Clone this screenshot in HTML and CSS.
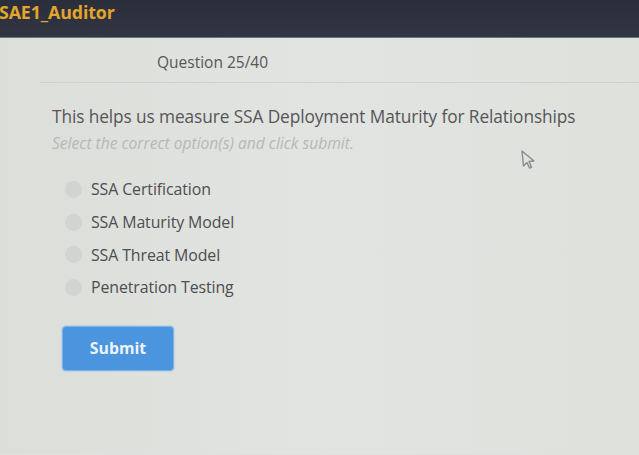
FILE: index.html
```html
<!DOCTYPE html>
<html>
<head>
<meta charset="utf-8">
<link rel="stylesheet" href="styles.css">
</head>
<body>
<header class="topbar">
  <span class="app-title">SAE1_Auditor</span>
</header>
<main class="quiz">
  <div class="counter">Question 25/40</div>
  <div class="divider"></div>
  <section class="question">
    <h1 class="q-text">This helps us measure SSA Deployment Maturity for Relationships</h1>
    <p class="hint">Select the correct option(s) and click submit.</p>
    <ul class="options">
      <li class="option"><span class="radio"></span><span class="label">SSA Certification</span></li>
      <li class="option"><span class="radio"></span><span class="label">SSA Maturity Model</span></li>
      <li class="option"><span class="radio"></span><span class="label">SSA Threat Model</span></li>
      <li class="option"><span class="radio"></span><span class="label">Penetration Testing</span></li>
    </ul>
    <button class="submit">Submit</button>
  </section>
  <svg class="cursor" width="18" height="22" viewBox="0 0 18 22">
    <path d="M3 2 L4.5 17 L8 13.5 L10.5 19 L12.5 18 L10 12.5 L15 12 Z" fill="none" stroke="#8a8c8a" stroke-width="1.4" stroke-linejoin="round"/>
  </svg>
</main>
</body>
</html>
```
FILE: styles.css
```css
* { box-sizing: border-box; }
html, body { margin: 0; padding: 0; }
body {
  width: 639px;
  height: 455px;
  overflow: hidden;
  background: #dfe1de;
  font-family: "Open Sans", "Noto Sans", sans-serif;
}
.topbar {
  height: 38px;
  background: linear-gradient(#2a2e3a, #313642);
  display: flex;
  align-items: flex-start;
  padding: 0;
  border-bottom: 1px solid #6d737a;
}
.app-title {
  color: #e3a52c;
  font-weight: 700;
  font-size: 17.8px;
  line-height: 24px;
  margin-left: -1px;
  letter-spacing: -0.1px;
}
.quiz {
  position: relative;
  height: 416px;
  background: linear-gradient(90deg, #dcdeda 0%, #e2e4e1 50%, #dfe1dd 100%);
}
.counter {
  padding: 13px 0 0 157px;
  font-size: 15.5px;
  line-height: 22px;
  color: #565758;
}
.divider {
  margin: 9px 0 0 40px;
  height: 1px;
  background: #cfd1ce;
}
.question {
  padding: 0 0 0 52px;
}
.q-text {
  margin: 22px 0 0 0;
  font-weight: 400;
  font-size: 17.3px;
  line-height: 24px;
  color: #555657;
  letter-spacing: -0.1px;
}
.hint {
  margin: 4px 0 0 0;
  font-style: italic;
  font-size: 15.6px;
  line-height: 20px;
  color: #b6b8b5;
  letter-spacing: 0;
}
.options {
  list-style: none;
  margin: 26px 0 0 0;
  padding: 0;
  display: flex;
  flex-direction: column;
  gap: 12px;
}
.option {
  display: flex;
  align-items: center;
  height: 20.7px;
}
.radio {
  width: 17px;
  height: 17px;
  border-radius: 50%;
  background: #d2d4d1;
  margin-left: 13px;
  margin-right: 9px;
}
.label {
  font-size: 15.9px;
  color: #4d4e4f;
  letter-spacing: -0.1px;
}
.submit {
  margin: 28px 0 0 10px;
  width: 112px;
  height: 45px;
  border: 1px solid #7fb3e8;
  border-radius: 4px;
  background: #4b94de;
  color: #eef3f8;
  font-family: "Open Sans", "Noto Sans", sans-serif;
  font-weight: 700;
  font-size: 15.8px;
  box-shadow: 0 0 2px #8ab8e6;
}
.cursor {
  position: absolute;
  left: 519px;
  top: 111px;
}
```
